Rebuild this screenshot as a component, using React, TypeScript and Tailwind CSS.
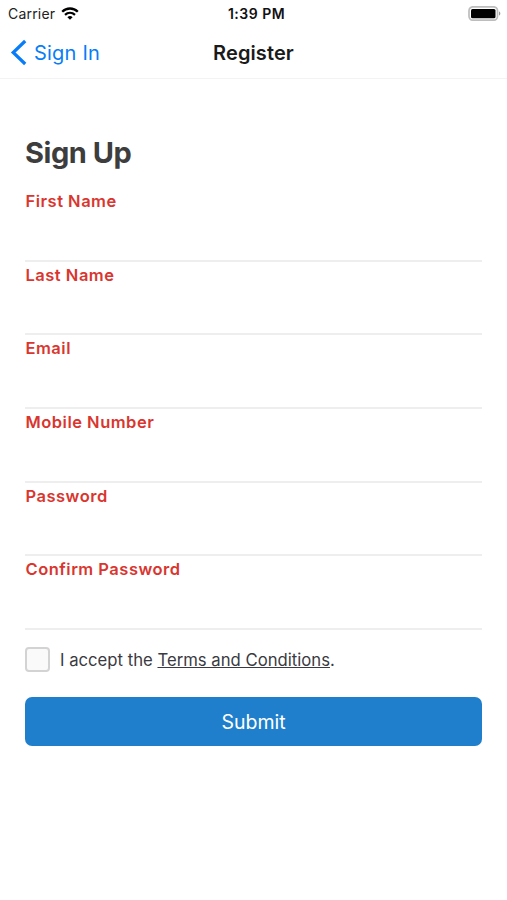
import { useState } from 'react';

const fields = [
  { label: 'First Name', type: 'text' },
  { label: 'Last Name', type: 'text' },
  { label: 'Email', type: 'email' },
  { label: 'Mobile Number', type: 'tel' },
  { label: 'Password', type: 'password' },
  { label: 'Confirm Password', type: 'password' },
];

function StatusBar() {
  return (
    <div className="relative flex h-[27px] items-center justify-between pl-2 pr-[6px] text-black">
      <div className="flex items-center gap-1.5">
        <span className="text-[14px] tracking-[0.2px] text-[#222]">Carrier</span>
        <svg width="18" height="13" viewBox="0 0 18 13" fill="none">
          <path d="M1.200 4.700C5.500.4 12.500.4 16.800 4.700" stroke="#000" strokeWidth="2.300" />
          <path d="M4 7.900c2.900-2.700 7.100-2.700 10 0" stroke="#000" strokeWidth="2.200" />
          <path d="M9 12.800 6.400 10.200a3.800 3.800 0 0 1 5.200 0z" fill="#000" />
        </svg>
      </div>
      <span className="absolute inset-x-0 pl-[6px] text-center text-[14px] font-semibold tracking-[0.5px] text-[#111]">
        1:39 PM
      </span>
      <svg width="33" height="15" viewBox="0 0 33 15" fill="none">
        <rect x="1" y="0.8" width="28.500" height="13.400" rx="4" stroke="#bdbdbd" strokeWidth="1.700" />
        <rect x="3" y="3" width="24.500" height="9.200" rx="1.500" fill="#000" />
        <path d="M31 5.500v4c.8-.3 1.300-1 1.300-2s-.5-1.700-1.300-2z" fill="#999" />
      </svg>
    </div>
  );
}

export default function App() {
  const [accepted, setAccepted] = useState(false);

  return (
    <div className="h-[900px] w-full bg-white font-['Inter',sans-serif]">
      <StatusBar />

      {/* Navigation */}
      <header className="relative flex h-[52px] items-center border-b border-[#f3f3f3] pl-[10px]">
        <button className="flex items-center gap-[7px] text-[20px] tracking-[0.2px] text-[#087df7]">
          <svg width="17" height="28" viewBox="0 0 17 28" fill="none">
            <path d="M15.200 2 3.200 13.500l12 11.500" stroke="currentColor" strokeWidth="3.200" />
          </svg>
          Sign In
        </button>
        <h1 className="pointer-events-none absolute inset-x-0 text-center text-[20px] font-semibold tracking-[0.1px] text-[#1a1a1a]">
          Register
        </h1>
      </header>

      <form className="px-[25px] pt-[54px]" onSubmit={(e) => e.preventDefault()}>
        <h2 className="mb-[15px] text-[29px] font-bold leading-[40px] tracking-[-0.45px] text-[#3d3d3d]">Sign Up</h2>

        {fields.map((field) => (
          <label
            key={field.label}
            className="flex h-[73.7px] flex-col border-b-2 border-[#eeeeee] pl-[0.5px] text-[16.5px] font-semibold leading-[26px] tracking-[0.5px] text-[#d9362f]"
          >
            {field.label}
            <input type={field.type} className="w-full flex-1 text-black outline-none" />
          </label>
        ))}

        <div className="mt-[16px] flex items-center gap-[10px] text-[16.7px] leading-[25px] text-[#3a3a42]">
          <input
            type="checkbox"
            checked={accepted}
            onChange={() => setAccepted(!accepted)}
            className="size-[25px] appearance-none rounded border-2 border-[#d3d3d3] bg-[#fafafa] checked:bg-[#207fcc]"
          />
          <span className="pt-[2px]">
            I accept the <a className="underline">Terms and Conditions</a>.
          </span>
        </div>

        <button className="mt-[24px] h-[49px] w-full rounded-[7px] bg-[#207fcc] pt-[2px] text-[19.5px] text-white">
          Submit
        </button>
      </form>
    </div>
  );
}
